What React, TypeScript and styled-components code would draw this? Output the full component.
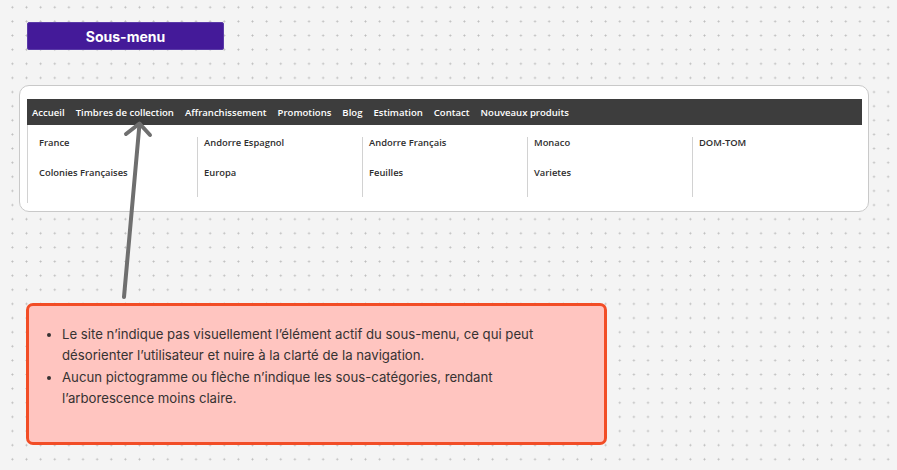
import React from "react";
import styled, { createGlobalStyle } from "styled-components";

const Global = createGlobalStyle`
  html, body { margin: 0; padding: 0; }
  body {
    width: 897px;
    height: 470px;
    overflow: hidden;
    background-color: #f4f4f4;
    background-image: radial-gradient(circle, #bcbcbc 0.75px, rgba(188,188,188,0) 1.25px);
    background-size: 14.14px 14.14px;
    background-position: 5.33px 0.23px;
    font-family: Inter, "Liberation Sans", sans-serif;
  }
`;

const Page = styled.div`
  position: relative;
  width: 897px;
  height: 470px;
  box-sizing: border-box;
  padding: 22px 0 0 19px;
  display: flex;
  flex-direction: column;
  align-items: flex-start;
`;

const TitleButton = styled.div`
  margin-left: 8px;
  width: 197px;
  height: 28px;
  box-sizing: border-box;
  background: #441a99;
  border: 1px solid #5a3aa8;
  border-radius: 2px;
  color: #ffffff;
  font-family: Inter, sans-serif;
  font-weight: 700;
  font-size: 14px;
  display: flex;
  align-items: center;
  justify-content: center;
`;

const Card = styled.div`
  margin-top: 35px;
  width: 850px;
  height: 127px;
  box-sizing: border-box;
  background: #ffffff;
  border: 1px solid #c9c9c9;
  border-radius: 10px;
  padding: 13px 6px 0 7px;
  display: flex;
  flex-direction: column;
`;

const NavBar = styled.nav`
  height: 26px;
  box-sizing: border-box;
  padding: 2px 0 0 5px;
  background: #3d3d3d;
  display: flex;
  align-items: center;
  gap: 11px;
`;

const NavItem = styled.span`
  color: #ffffff;
  font-family: "Open Sans", sans-serif;
  font-weight: 600;
  font-size: 9.55px;
  line-height: 12px;
  white-space: nowrap;
`;

const Panel = styled.div`
  border-left: 1px solid #d2d2d2;
  padding: 12px 0 6px 4px;
  display: grid;
  grid-template-columns: repeat(5, 165px);
`;

const Column = styled.div<{ $divider: boolean }>`
  height: 60px;
  box-sizing: border-box;
  padding-left: 6px;
  border-left: 1px solid ${(p) => (p.$divider ? "#d2d2d2" : "transparent")};
  display: flex;
  flex-direction: column;
  gap: 18px;
`;

const SubItem = styled.span`
  color: #2e2e2e;
  font-family: "Open Sans", sans-serif;
  font-weight: 600;
  font-size: 9.4px;
  line-height: 12px;
  white-space: nowrap;
`;

const NoteBox = styled.div`
  margin-top: 91px;
  margin-left: 7px;
  width: 581px;
  height: 142px;
  box-sizing: border-box;
  background: #ffc5c0;
  border: 3px solid #f24d26;
  border-radius: 7px;
  padding: 18px 30px 0 0;
`;

const NoteList = styled.ul`
  margin: 0;
  padding-left: 33px;
  color: #363232;
  font-family: Inter, sans-serif;
  font-size: 13.2px;
  line-height: 21.3px;
`;

const ArrowLayer = styled.svg`
  position: absolute;
  left: 0;
  top: 0;
  pointer-events: none;
`;

const navItems = [
  "Accueil",
  "Timbres de collection",
  "Affranchissement",
  "Promotions",
  "Blog",
  "Estimation",
  "Contact",
  "Nouveaux produits",
];

const columns: string[][] = [
  ["France", "Colonies Françaises"],
  ["Andorre Espagnol", "Europa"],
  ["Andorre Français", "Feuilles"],
  ["Monaco", "Varietes"],
  ["DOM-TOM"],
];

export default function App() {
  return (
    <>
      <Global />
      <Page>
        <TitleButton>Sous-menu</TitleButton>
        <Card>
          <NavBar>
            {navItems.map((n) => (
              <NavItem key={n}>{n}</NavItem>
            ))}
          </NavBar>
          <Panel>
            {columns.map((col, i) => (
              <Column key={i} $divider={i > 0}>
                {col.map((it) => (
                  <SubItem key={it}>{it}</SubItem>
                ))}
              </Column>
            ))}
          </Panel>
        </Card>
        <NoteBox>
          <NoteList>
            <li>
              Le site n’indique pas visuellement l’élément actif du sous-menu, ce qui peut
              désorienter l’utilisateur et nuire à la clarté de la navigation.
            </li>
            <li>
              Aucun pictogramme ou flèche n’indique les sous-catégories, rendant
              l’arborescence moins claire.
            </li>
          </NoteList>
        </NoteBox>
        <ArrowLayer width="897" height="470" viewBox="0 0 897 470">
          <g stroke="#6f6f6f" strokeWidth="4" strokeLinecap="round" strokeLinejoin="round" fill="none">
            <line x1="124" y1="297" x2="139.5" y2="124" />
            <polyline points="126,134 139.5,123.5 150,135" />
          </g>
        </ArrowLayer>
      </Page>
    </>
  );
}
